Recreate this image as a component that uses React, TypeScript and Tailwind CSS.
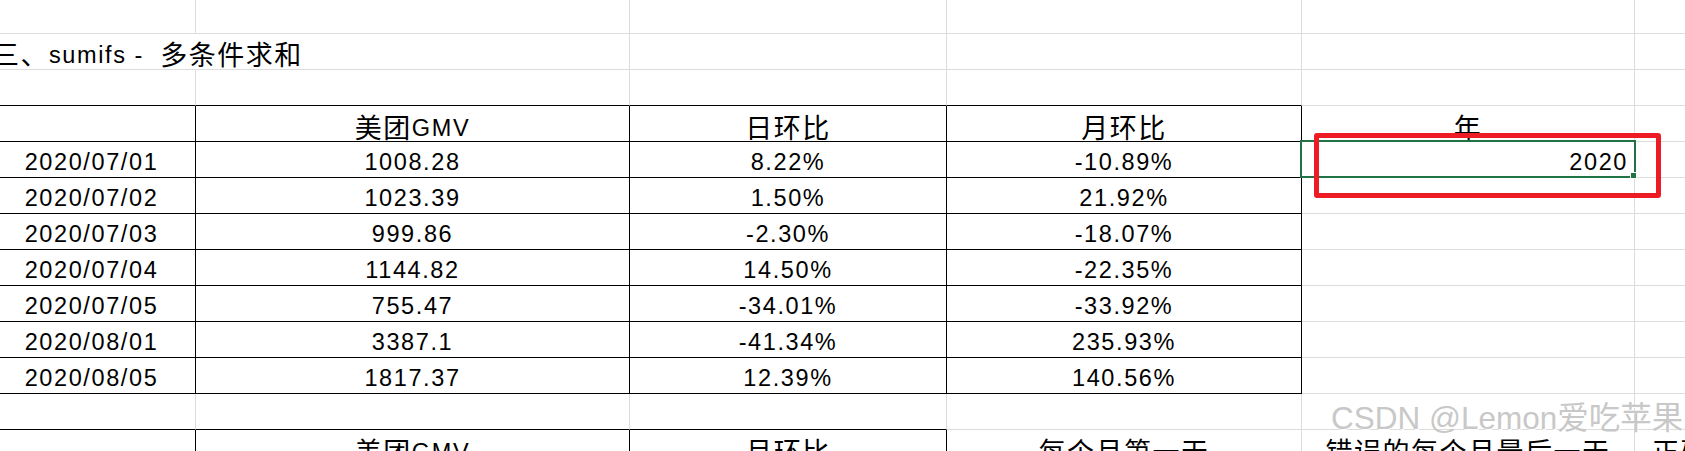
import type { ReactNode } from "react";

const widths = ["w-[208px]", "w-[434px]", "w-[317px]", "w-[355px]", "w-[333px]", "w-[320px]"];

const rightColor = {
  g: "border-r-[#dcdcdc]",
  k: "border-r-black",
  n: "border-r-transparent",
};

const bottomColor = {
  g: "border-b-[#dcdcdc]",
  k: "border-b-black",
};

const justify = {
  l: "justify-start pl-[4px]",
  c: "justify-center",
  r: "justify-end pr-[6px]",
};

type CellDef = {
  t?: ReactNode;
  r?: keyof typeof rightColor;
  b?: keyof typeof bottomColor;
  a?: keyof typeof justify;
};

const data = [
  ["2020/07/01", "1008.28", "8.22%", "-10.89%"],
  ["2020/07/02", "1023.39", "1.50%", "21.92%"],
  ["2020/07/03", "999.86", "-2.30%", "-18.07%"],
  ["2020/07/04", "1144.82", "14.50%", "-22.35%"],
  ["2020/07/05", "755.47", "-34.01%", "-33.92%"],
  ["2020/08/01", "3387.1", "-41.34%", "235.93%"],
  ["2020/08/05", "1817.37", "12.39%", "140.56%"],
];

function Zh({ children }: { children: ReactNode }) {
  return (
    <span className="font-['Noto_Sans_CJK_SC',sans-serif] text-[27px] tracking-[1.5px]">
      {children}
    </span>
  );
}

function Row({ h, pb, cells }: { h: string; pb: string; cells: CellDef[] }) {
  return (
    <div className={`flex ${h}`}>
      {widths.map((w, i) => {
        const c = cells[i] ?? {};
        return (
          <div
            key={i}
            className={`${w} flex h-full shrink-0 items-end whitespace-nowrap border-r border-b ${rightColor[c.r ?? "g"]} ${bottomColor[c.b ?? "g"]} ${justify[c.a ?? "c"]} ${pb}`}
          >
            {c.t}
          </div>
        );
      })}
    </div>
  );
}

export default function App() {
  return (
    <div className="relative h-[451px] w-[1685px] overflow-hidden bg-white font-['Liberation_Sans','Noto_Sans_CJK_SC',sans-serif] text-[23.5px] leading-none tracking-[1.6px] text-black">
      <div className="-mt-[3px] -ml-[12px] flex flex-col">
        <Row h="h-[37px]" pb="pb-[3px]" cells={[]} />
        <Row
          h="h-[36px]"
          pb="pb-[2px]"
          cells={[
            {
              a: "l",
              r: "n",
              t: (
                <>
                  <Zh>三、</Zh>
                  {"sumifs\u00a0-\u00a0\u00a0"}
                  <Zh>多条件求和</Zh>
                </>
              ),
            },
          ]}
        />
        <Row h="h-[36px]" pb="pb-[3px]" cells={[{ b: "k" }, { b: "k" }, { b: "k" }, { b: "k" }]} />
        <Row
          h="h-[36px]"
          pb="pb-[1px]"
          cells={[
            { r: "k", b: "k" },
            { r: "k", b: "k", t: <><Zh>美团</Zh>GMV</> },
            { r: "k", b: "k", t: <Zh>日环比</Zh> },
            { r: "k", b: "k", t: <Zh>月环比</Zh> },
            { t: <Zh>年</Zh> },
          ]}
        />
        {data.map((row, i) => (
          <Row
            key={row[0]}
            h="h-[36px]"
            pb="pb-[3px]"
            cells={[
              ...row.map((v) => ({ r: "k" as const, b: "k" as const, t: v })),
              i === 0 ? { a: "r" as const, t: "2020" } : {},
            ]}
          />
        ))}
        <Row h="h-[36px]" pb="pb-[3px]" cells={[{ b: "k" }, { b: "k" }, { b: "k" }]} />
        <Row
          h="h-[36px]"
          pb="pb-[1px]"
          cells={[
            { r: "k", b: "k" },
            { r: "k", b: "k", t: <><Zh>美团</Zh>GMV</> },
            { r: "k", b: "k", t: <Zh>月环比</Zh> },
            { t: <Zh>每个月第一天</Zh> },
            { t: <Zh>错误的每个月最后一天</Zh> },
            { t: <Zh>正确的每个月最后一天</Zh> },
          ]}
        />
      </div>

      {/* active cell */}
      <div className="absolute top-[140px] left-[1300px] h-[38px] w-[336px] border-2 border-[#217346]" />
      <div className="absolute top-[172px] left-[1630px] h-[7px] w-[7px] border border-white bg-[#217346]" />

      {/* annotation */}
      <div className="absolute top-[133px] left-[1314px] h-[65px] w-[347px] rounded-[3px] border-[5px] border-[#ed1c24]" />

      <div className="absolute top-[403px] left-[1331px] whitespace-nowrap text-[31.5px] tracking-normal text-[#c8c8c8] [text-shadow:1px_1px_0_#ffffff]">
        CSDN @Lemon爱吃苹果
      </div>
    </div>
  );
}
